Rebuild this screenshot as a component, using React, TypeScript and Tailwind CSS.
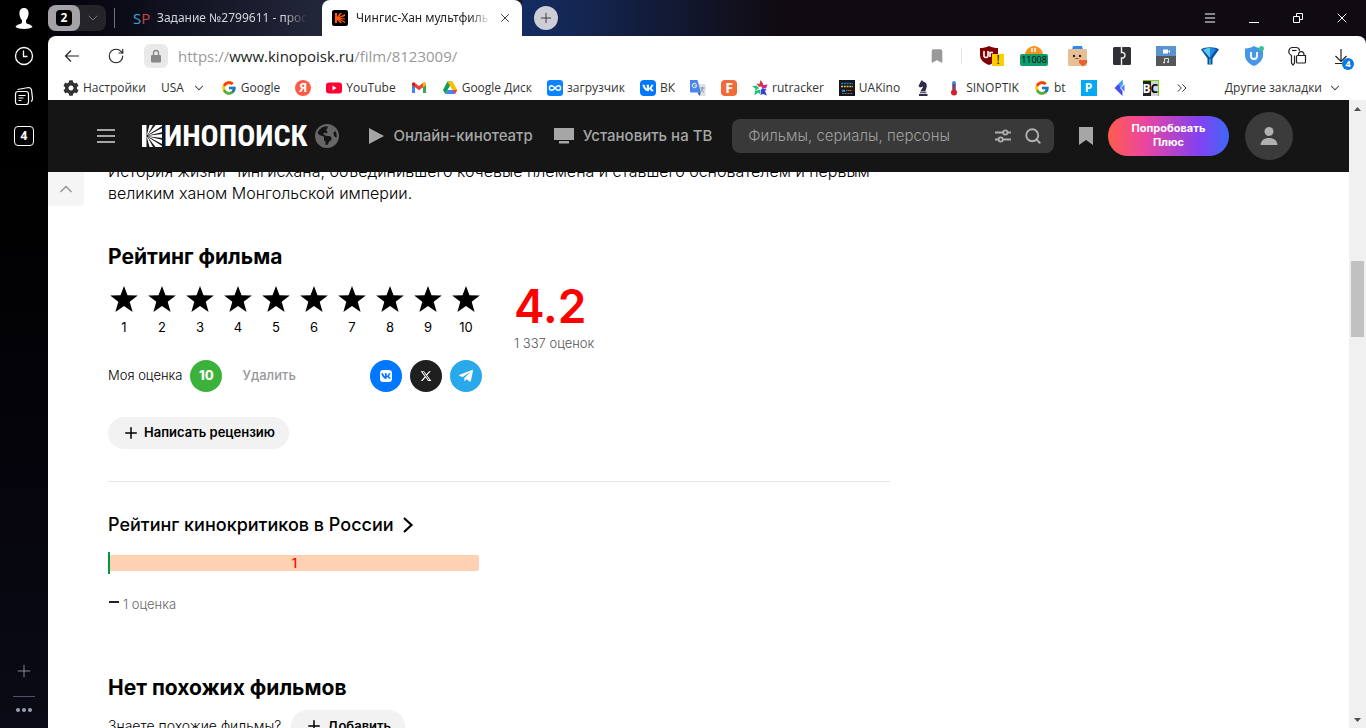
import type { ReactNode } from 'react';
import { Bookmark, ChevronDown, ChevronsRight, ChevronUp, Menu, Plus, RotateCw, Search, X } from 'lucide-react';
import { FaCog, FaTelegramPlane, FaVk } from 'react-icons/fa';
import { FaEarthAmericas, FaXTwitter } from 'react-icons/fa6';
import { FcGoogle } from 'react-icons/fc';

interface BookmarkItem {
    label: string;
    text?: string;
    icon?: ReactNode;
    folder?: boolean;
}

const GoogleIcon = () => <FcGoogle className="h-4 w-4" />;

const YoutubeIcon = () => (
    <svg viewBox="0 0 16 16" className="h-4 w-4">
        <rect y="2.5" width="16" height="11" rx="3" fill="#ff0033" />
        <path d="M6.5 5.6v4.8L10.6 8z" fill="#fff" />
    </svg>
);

const GmailIcon = () => (
    <svg viewBox="0 0 16 16" className="h-4 w-4">
        <path d="M1 4.5V13h3V6.7z" fill="#4285f4" />
        <path d="M15 4.5V13h-3V6.7z" fill="#34a853" />
        <path d="M1 4.3C1 2.6 2.8 2 4 3l4 3.1L12 3c1.2-1 3-.4 3 1.3L15 5l-7 5.2L1 5z" fill="#ea4335" />
        <path d="M12 3c1.2-1 3-.4 3 1.3V5l-3 2.2z" fill="#fbbc04" />
        <path d="M4 3C2.8 2 1 2.6 1 4.3V5l3 2.2z" fill="#c5221f" />
    </svg>
);

const DriveIcon = () => (
    <svg viewBox="0 0 16 16" className="h-4 w-4">
        <path d="M5.5 1.5h5L6 9.3 3.3 14 1 10z" fill="#0f9d58" />
        <path d="M5.5 1.5h5L15.2 10h-5z" fill="#fbbc04" />
        <path d="M1 10l2.3 4h9.600l2.300-4H5.600l-2.300 4z" fill="#4285f4" />
        <path d="M12.9 14l2.300-4h-4.600z" fill="#ea4335" />
        <path d="M8 6.3L10.1 10H5.9z" fill="#fff" />
    </svg>
);

const LoopIcon = () => (
    <svg viewBox="0 0 16 16" className="h-4 w-4">
        <rect width="16" height="16" rx="3" fill="#0b84ff" />
        <path
            d="M8 8C6.8 6.5 6 5.7 4.7 5.7a2.3 2.3 0 000 4.600C6 10.3 6.800 9.5 8 8s2-2.300 3.300-2.300a2.300 2.300 0 010 4.600C10 10.300 9.200 9.500 8 8z"
            fill="none"
            stroke="#fff"
            strokeWidth="1.4"
        />
    </svg>
);

const VkIcon = () => (
    <span className="flex h-4 w-4 items-center justify-center rounded bg-[#0077ff] text-white">
        <FaVk className="h-3 w-3" />
    </span>
);

const TranslateIcon = () => (
    <svg viewBox="0 0 16 16" className="h-4 w-4">
        <path d="M6 4h9.500v12H9.500z" fill="#dfe1e5" />
        <path d="M0 0h7.500L11 12.500H1a1 1 0 01-1-1z" fill="#4c86ec" />
        <path d="M7.500 12.500H11L9.300 16z" fill="#2f5fc4" />
        <path d="M6.700 5.700H4.600M6.500 4.600a2.200 2.200 0 10.200 1.300" fill="none" stroke="#fff" strokeWidth="1" />
        <path d="M10.500 8h4.200M12.500 7v1c0 2-1 3.300-2 4M11.300 9.500c.7 1.300 1.600 2 2.700 2.700" fill="none" stroke="#7a8a99" strokeWidth=".9" />
    </svg>
);

const PinwheelIcon = () => (
    <svg viewBox="0 0 16 16" className="h-4 w-4">
        <path d="M7 7L4.500 3.500 7.500 4l1-4 2.500 3.500L10 7z" fill="#e0314b" />
        <path d="M10 3.500l1.500 1.500 4-.5-1.500 4-4-.5z" fill="#d12a8b" />
        <path d="M10 8l4.500 1.500-1.500 1.500 2 4.500-4-1.500-2.500 1 .5-5z" fill="#3b3fd8" />
        <path d="M8.500 9.500L8 14l-2-1.500L2.500 15.500 3 11z" fill="#19c46b" />
        <path d="M7 8l-4 3 .5-2.500L0 6.500l4.500-1z" fill="#19c46b" />
        <circle cx="8.300" cy="8" r="1.400" fill="#fff" />
    </svg>
);

const UaKinoIcon = () => (
    <svg viewBox="0 0 16 16" className="h-4 w-4">
        <rect width="16" height="16" fill="#15171c" />
        <path d="M2 3.500h12" stroke="#2a7fc4" strokeWidth="1.600" strokeDasharray="2 .8" />
        <path d="M2 6.500h12" stroke="#e8c531" strokeWidth="1.400" strokeDasharray="2 .8" />
        <path d="M3 10.800h3" stroke="#2a9df4" strokeWidth="2" />
        <path d="M7 10.500h6" stroke="#d8702c" strokeWidth="1.200" strokeDasharray="1.500 .5" />
        <path d="M3 13.500h10" stroke="#8a8a8a" strokeWidth=".8" strokeDasharray="1 .5" />
    </svg>
);

const KnightIcon = () => (
    <svg viewBox="0 0 16 16" className="h-4 w-4" fill="#2f2c4a">
        <path d="M7 0l1 1.500c3 .5 4 2.500 3.800 5-.2 2-1.300 3.200-1.300 5H5.500c0-2 2.500-3 2.500-5L5 7.500 3.500 6l2-4z" />
        <path d="M5 12.300h6.500v1H5zM4 14h8.500v2H4z" />
    </svg>
);

const ThermometerIcon = () => (
    <svg viewBox="0 0 16 16" className="h-4 w-4">
        <rect x="6" y="1" width="4" height="10" rx="2" fill="#3b8fe0" />
        <path d="M8 4v8" stroke="#d3202b" strokeWidth="2" />
        <circle cx="8" cy="12.500" r="3" fill="#d3202b" />
    </svg>
);

const FlutterIcon = () => (
    <svg viewBox="0 0 16 16" className="h-4 w-4">
        <path d="M2.500 8L10.500 0v5L8 8l2.500 3v5z" fill="#4a4df0" />
        <path d="M6.500 4l4-4v5L8.500 7.500z" fill="#35a7f5" />
        <path d="M9 8l3.500-3.500v7z" fill="#4b7cf5" />
    </svg>
);

const LetterIcon = ({ children, className }: { children: ReactNode; className: string }) => (
    <span className={`flex h-4 w-4 items-center justify-center leading-none font-bold ${className}`}>{children}</span>
);

const BOOKMARKS: BookmarkItem[] = [
    { label: 'Настройки', text: 'Настройки', icon: <FaCog className="h-4 w-4 text-[#333]" /> },
    { label: 'USA', text: 'USA', folder: true },
    { label: 'Google', text: 'Google', icon: <GoogleIcon /> },
    { label: 'Яндекс', icon: <LetterIcon className="rounded-full bg-[#fc5b46] text-xs text-white">Я</LetterIcon> },
    { label: 'YouTube', text: 'YouTube', icon: <YoutubeIcon /> },
    { label: 'Gmail', icon: <GmailIcon /> },
    { label: 'Google Диск', text: 'Google Диск', icon: <DriveIcon /> },
    { label: 'загрузчик', text: 'загрузчик', icon: <LoopIcon /> },
    { label: 'ВК', text: 'ВК', icon: <VkIcon /> },
    { label: 'Переводчик', icon: <TranslateIcon /> },
    { label: 'F', icon: <LetterIcon className="rounded-sm bg-[#f26b3a] text-sm text-white">F</LetterIcon> },
    { label: 'rutracker', text: 'rutracker', icon: <PinwheelIcon /> },
    { label: 'UAKino', text: 'UAKino', icon: <UaKinoIcon /> },
    { label: 'Шахматы', icon: <KnightIcon /> },
    { label: 'SINOPTIK', text: 'SINOPTIK', icon: <ThermometerIcon /> },
    { label: 'bt', text: 'bt', icon: <GoogleIcon /> },
    { label: 'P', icon: <LetterIcon className="bg-[#03a9f4] text-xs text-white">P</LetterIcon> },
    { label: 'Flutter', icon: <FlutterIcon /> },
    {
        label: 'BC',
        icon: (
            <span className="flex h-4 w-4 border-t border-r border-lime-500 text-xs leading-4 font-bold">
                <span className="w-2 bg-[#222] text-white">B</span>
                <span className="w-2 bg-gray-300 text-black">C</span>
            </span>
        ),
    },
];

const SideBar = () => (
    <aside className="flex w-12 shrink-0 flex-col items-center bg-linear-to-b from-black via-[#040308] to-[#0a0b16] text-white">
        <button aria-label="Профиль" className="flex h-9 items-center">
            <svg viewBox="0 0 20 24" className="h-6 w-5">
                <path
                    d="M10 2c3 0 4.600 2 4.600 5 0 3.200-1.200 6-2.600 7.200v2.200c0 1.600 6 1.800 6.500 4.600-3 2.500-14 2.500-17 0C2 18.200 8 18 8 16.400v-2.200C6.600 13 5.400 10.200 5.400 7c0-3 1.600-5 4.600-5z"
                    fill="#fff"
                />
            </svg>
        </button>
        <button aria-label="История" className="flex h-10 items-center">
            <svg viewBox="0 0 20 20" className="h-5 w-5" fill="none" stroke="#fff" strokeWidth="1.300">
                <circle cx="10" cy="10" r="8.500" />
                <path d="M9.500 4.500v6h4" />
            </svg>
        </button>
        <button aria-label="Коллекции" className="flex h-10 items-center">
            <svg viewBox="0 0 20 20" className="h-5 w-5" fill="none" stroke="#fff" strokeWidth="1.200">
                <rect x="1.500" y="5.500" width="13" height="13" rx="2.500" />
                <path d="M4.500 9.500h7M4.500 12h5M4.500 14.500h3" />
                <path d="M3.500 3.500l11-2c1.500 0 2.700 1 3 2.500l1 8.500c0 1.500-.5 2.500-1.500 3" />
            </svg>
        </button>
        <button aria-label="Группы вкладок" className="mt-2.5 flex h-5 w-5 items-center justify-center rounded border border-white text-xs font-bold">
            4
        </button>
        <div className="grow" />
        <button aria-label="Добавить панель" className="text-gray-400">
            <Plus className="h-5 w-5" strokeWidth={1} />
        </button>
        <div className="mt-[15px] mb-[11px] w-[22px] border-t border-gray-600" />
        <button aria-label="Ещё" className="mb-4 flex gap-0.5">
            <span className="h-1 w-1 rounded-full bg-gray-400" />
            <span className="h-1 w-1 rounded-full bg-gray-400" />
            <span className="h-1 w-1 rounded-full bg-gray-400" />
        </button>
    </aside>
);

const TabStrip = () => (
    <div className="flex h-9 shrink-0 items-center bg-linear-to-r from-[#05040c] from-0% via-[#222639] via-20% to-[#100b12] to-45% text-xs">
        <div className="flex h-[26px] rounded-lg bg-[#252429]">
            <button aria-label="2 вкладки" className="flex w-8 items-center justify-center rounded-lg bg-[#a3a2a7]">
                <span className="flex h-4 w-4 items-center justify-center rounded bg-black text-xs font-bold text-white">2</span>
            </button>
            <button aria-label="Список вкладок" className="flex w-[26px] items-center justify-center text-gray-400">
                <ChevronDown className="h-4 w-4" strokeWidth={1} />
            </button>
        </div>
        <div className="ml-2 h-5 w-px bg-gray-500" />
        <button className="flex h-full w-[207px] items-center pl-4.5 text-gray-300">
            <span className="w-6 shrink-0 text-left text-[15px]">
                <span className="text-[#3ca7dc]">S</span>
                <span className="text-[#c94444]">P</span>
            </span>
            <span className="font-['Noto_Sans',sans-serif] whitespace-nowrap [mask-image:linear-gradient(to_right,black_85%,transparent)]">
                Задание №2799611 - прос
            </span>
        </button>
        <div className="flex h-full w-50 items-center gap-2 rounded-t-lg bg-white px-2.5 text-[#222]">
            <svg viewBox="0 0 16 16" className="h-4 w-4 shrink-0">
                <rect width="16" height="16" rx="2" fill="#000" />
                <path d="M3 3h2v4l3-4h2L7 7l6-3v2L8 8l5 .5v1L8 9l5 2.500v1.500L7.500 10l2.500 3H8L5 9.500V13H3z" fill="#ff5a00" />
            </svg>
            <button className="grow text-left font-['Noto_Sans',sans-serif] whitespace-nowrap [mask-image:linear-gradient(to_right,black_85%,transparent)]">
                Чингис-Хан мультфиль
            </button>
            <button aria-label="Закрыть вкладку" className="shrink-0">
                <X className="h-3.5 w-3.5" strokeWidth={1.5} />
            </button>
        </div>
        <div className="flex h-full w-64 items-center bg-linear-to-r from-[#142c62] to-transparent">
            <button aria-label="Новая вкладка" className="ml-3 flex h-6 w-6 items-center justify-center rounded-full bg-[#cdced6] text-[#222]">
                <Plus className="h-4 w-4" strokeWidth={1.2} />
            </button>
        </div>
        <div className="mr-0.5 ml-auto flex items-center text-white">
            <button aria-label="Меню" className="flex w-11 justify-center">
                <Menu className="h-3.5 w-3.5" strokeWidth={1.8} />
            </button>
            <button aria-label="Свернуть" className="flex h-2.5 w-11 items-end justify-center">
                <span className="h-px w-2.5 bg-white" />
            </button>
            <button aria-label="Восстановить" className="flex w-11 justify-center">
                <svg viewBox="0 0 12 12" className="h-3 w-3" fill="none" stroke="#fff">
                    <path d="M1.500 4.500h6v6h-6zM4.500 4V1.500h6v6H8" />
                </svg>
            </button>
            <button aria-label="Закрыть" className="flex w-11 justify-center">
                <X className="h-4 w-4" strokeWidth={1.5} />
            </button>
        </div>
    </div>
);

const Extensions = () => (
    <div className="flex items-center gap-5">
        <button aria-label="uBlock" className="relative h-6 w-6">
            <svg viewBox="0 0 24 24" className="h-6 w-6">
                <path d="M11 2c3 1.500 6 2 9 2v7c0 5-4 8-9 10-5-2-9-5-9-10V4c3 0 6-.5 9-2z" fill="#800000" />
                <path d="M6 7v4.500a2 2 0 004 0V7M12 13V8.500h3" fill="none" stroke="#fff" strokeWidth="1.600" />
            </svg>
            <span className="absolute -right-0.5 bottom-0.5 h-3 w-3 bg-[#ffcc00] text-center text-xs leading-3 text-black">!</span>
        </button>
        <button aria-label="Счётчик" className="relative -mx-0.5 h-6 w-7">
            <svg viewBox="0 0 24 24" className="mx-auto h-6 w-6">
                <circle cx="12" cy="11" r="9" fill="#f7931a" />
                <path d="M10 4v4M13 4v4" stroke="#fff" strokeWidth="1.500" />
            </svg>
            <span className="absolute inset-x-0 bottom-0.5 h-3 rounded-xs bg-[#0f9d6e] text-center text-[9px] leading-3 text-black">11008</span>
        </button>
        <button aria-label="Помощник">
            <svg viewBox="0 0 24 24" className="h-6 w-6">
                <path d="M7 2h9l1 4H6z" fill="#2b8cf0" />
                <rect x="2" y="5" width="19" height="17" rx="1.500" fill="#e8bf94" />
                <circle cx="8" cy="12" r="1.200" fill="#222" />
                <circle cx="14" cy="12" r="1.200" fill="#222" />
                <path d="M9.500 14.500h3" stroke="#a33" strokeWidth="1" />
                <path d="M13 16h8v3l-4 3.500-4-3.500z" fill="#e8622c" />
            </svg>
        </button>
        <button aria-label="Тёмная тема">
            <svg viewBox="0 0 24 24" className="h-6 w-6">
                <rect x="3" y="3" width="18" height="18" rx="1.500" fill="#2f3033" />
                <path d="M11.500 3v5.500c1.500-.5 3.500.5 3.500 2.700s-2 3.300-3.500 2.800v7" fill="none" stroke="#f2f2f2" strokeWidth="1.400" />
            </svg>
        </button>
        <button aria-label="Загрузка медиа">
            <svg viewBox="0 0 24 24" className="h-6 w-6">
                <rect x="2" y="2" width="20" height="10" fill="#5b93cf" />
                <rect x="2" y="12" width="20" height="10" fill="#54585b" />
                <path d="M9 5.500h5v4H9zM14 7.500l2-1.500v3z" fill="#fff" />
                <path d="M10.500 18.500v-4h4V18" fill="none" stroke="#ddd" strokeWidth="1" />
                <circle cx="10" cy="18.500" r="1" fill="#ddd" />
                <circle cx="14" cy="18" r="1" fill="#ddd" />
            </svg>
        </button>
        <button aria-label="Кристалл">
            <svg viewBox="0 0 24 24" className="h-6 w-6">
                <path d="M3 5.500C6 2.500 18 2.500 21 5.500L14.500 14.500v6h-5v-6z" fill="#0c4f9c" />
                <path d="M5 6c2-1.500 4-2 7-2v10z" fill="#59c8f7" />
                <path d="M12 4c3 0 4.500.5 6 1.500L12 14z" fill="#1a8be0" />
                <path d="M11 15h2v5h-2z" fill="#2f9fe8" />
            </svg>
        </button>
        <button aria-label="Защита">
            <svg viewBox="0 0 24 24" className="h-6 w-6">
                <path d="M12 2c2.500 1.600 5.500 2.500 9 2.500V11c0 5.500-4 9-9 11-5-2-9-5.500-9-11V4.500C6.500 4.500 9.500 3.600 12 2z" fill="#4796e8" />
                <path d="M9 8v4c0 4 6 4 6 0V8" fill="none" stroke="#fff" strokeWidth="1.800" />
                <circle cx="19.500" cy="4.500" r="2.500" fill="#38c793" />
            </svg>
        </button>
        <button aria-label="Пароли">
            <svg viewBox="0 0 24 24" className="h-6 w-6" fill="none" stroke="#222" strokeWidth="1.200">
                <path d="M8.500 11.500V19l-1.500 2-1.500-2v-7.500C3.500 10.500 2.500 8.500 3 6.500 3.300 4.500 4.500 3.500 6.500 3.500h3.500c2 0 3.500 1.500 3.500 3.500" />
                <path d="M6 6.500h4.500" />
                <path d="M11.500 11.500h8v6.500a1 1 0 01-1 1h-7a1 1 0 01-1-1v-5.500a1 1 0 011-1zM12.500 11c0-4.500 5.500-4.500 5.500 0" />
            </svg>
        </button>
        <button aria-label="Загрузки" className="relative">
            <svg viewBox="0 0 24 24" className="h-6 w-6" fill="none" stroke="#222" strokeWidth="1.200">
                <path d="M11 5v12M5.500 12l5.500 5.500 5.500-5.500M5 19.500h8" />
            </svg>
            <span className="absolute right-0 -bottom-0.5 h-3 w-3 rounded-full bg-[#0a7bdc] text-center text-[9px] leading-3 font-bold text-white">
                4
            </span>
        </button>
    </div>
);

const AddressBar = () => (
    <div className="flex h-10 shrink-0 items-center rounded-t-lg bg-white pr-3 pl-3 text-[#222]">
        <button aria-label="Назад" className="flex w-6 justify-center">
            <svg viewBox="0 0 16 16" className="h-4 w-4" fill="none" stroke="currentColor" strokeWidth="1.200">
                <path d="M15 8H1.500M7 2.500L1.500 8 7 13.500" />
            </svg>
        </button>
        <button aria-label="Обновить" className="ml-5 flex w-6 justify-center">
            <RotateCw className="h-[18px] w-[18px]" strokeWidth={1.5} />
        </button>
        <button aria-label="Защищённое соединение" className="ml-4 flex h-6 w-6 items-center justify-center rounded-md bg-[#e9e9e9]">
            <svg viewBox="0 0 14 14" className="h-3.5 w-3.5">
                <rect x="2" y="6" width="10" height="7.500" rx="1" fill="#888" />
                <path d="M4.500 6V4a2.500 2.500 0 015 0v2" fill="none" stroke="#888" strokeWidth="1.300" />
            </svg>
        </button>
        <button className="ml-2.5 text-[15px] text-[#999]">
            https://<span className="text-[#222]">www.kinopoisk.ru</span>/film/8123009/
        </button>
        <button aria-label="В закладки" className="ml-auto text-[#999]">
            <Bookmark className="h-4 w-4" fill="currentColor" />
        </button>
        <div className="mr-4 ml-4 h-4 w-px bg-gray-200" />
        <Extensions />
    </div>
);

const BookmarksBar = () => (
    <nav className="flex h-6 shrink-0 items-center bg-white pr-6 pl-[15px] text-xs whitespace-nowrap text-[#333]">
        <div className="flex items-center gap-[15px]">
            {BOOKMARKS.map((item) => (
                <a key={item.label} href="#" aria-label={item.label} className="flex items-center gap-1">
                    {item.icon}
                    {item.text}
                    {item.folder && <ChevronDown className="ml-1 h-3.5 w-3.5" strokeWidth={1.8} />}
                </a>
            ))}
            <button aria-label="Ещё закладки">
                <ChevronsRight className="h-4 w-4" strokeWidth={1.5} />
            </button>
        </div>
        <button className="ml-auto flex items-center gap-1.5">
            Другие закладки
            <ChevronDown className="h-3.5 w-3.5" strokeWidth={1.8} />
        </button>
    </nav>
);

const KinopoiskLogo = () => (
    <a href="#" aria-label="Кинопоиск" className="flex items-center text-white">
        <svg viewBox="0 0 22 22" className="h-[22px] w-[22px]" fill="#fff">
            <path d="M0 0h4.500v22H0z" />
            <path d="M5 9.500L7.500 0H11L5.500 10z" />
            <path d="M5.500 10.300L13.500 0H20v1z" />
            <path d="M6 10.400L20 3v4.200z" />
            <path d="M6 10.800l14-1.900v4.200L6 11.200z" />
            <path d="M6 11.600l14 3.200V19z" />
            <path d="M5.500 11.700L20 21v1h-6.500z" />
            <path d="M5 12.500l.5-.5L11 22H7.500z" />
        </svg>
        <span className="font-['Liberation_Sans_Narrow','Roboto_Condensed','Roboto',sans-serif] text-[30px] leading-8 font-bold">ИНОПОИСК</span>
    </a>
);

const SiteHeader = () => (
    <header className="relative z-10 flex h-[72px] items-center bg-[#151515] pr-14 pl-12 text-[15px] font-medium text-[#a6a6a6]">
        <button aria-label="Меню сайта" className="flex w-5 flex-col gap-1 px-px">
            <span className="h-0.5 bg-[#a6a6a6]" />
            <span className="h-0.5 bg-[#a6a6a6]" />
            <span className="h-0.5 bg-[#a6a6a6]" />
        </button>
        <div className="ml-[26px]">
            <KinopoiskLogo />
        </div>
        <FaEarthAmericas className="ml-2 h-6 w-6 shrink-0 text-[#666]" />
        <a href="#" className="ml-7 flex items-center gap-2 whitespace-nowrap">
            <svg viewBox="0 0 18 18" className="h-[18px] w-[18px]">
                <path d="M2 1l15 8-15 8z" fill="#a6a6a6" />
            </svg>
            Онлайн-кинотеатр
        </a>
        <a href="#" className="ml-5 flex items-center gap-2 whitespace-nowrap">
            <svg viewBox="0 0 22 18" className="h-[18px] w-[22px]">
                <path d="M1 1h20v12H1zM6 14h10v2.500H6z" fill="#a6a6a6" />
            </svg>
            Установить на ТВ
        </a>
        <div className="ml-5 flex h-[34px] min-w-0 grow items-center gap-2 rounded-lg bg-[#393939] px-3">
            <input
                aria-label="Поиск"
                placeholder="Фильмы, сериалы, персоны"
                className="min-w-0 grow bg-transparent pl-1 text-[15px] font-light outline-none placeholder:text-[#a0a0a0]"
            />
            <button aria-label="Фильтры">
                <svg viewBox="0 0 18 18" className="h-[18px] w-[18px]" fill="none" stroke="#b0b0b0" strokeWidth="1.800">
                    <path d="M1 5.500h8M13.500 5.500H17M1 12.500h3.500M9 12.500h8" />
                    <circle cx="11.300" cy="5.500" r="2.100" />
                    <circle cx="6.700" cy="12.500" r="2.100" />
                </svg>
            </button>
            <button aria-label="Найти" className="ml-1">
                <Search className="h-[18px] w-[18px] text-[#b0b0b0]" strokeWidth={2.5} />
            </button>
        </div>
        <button aria-label="Буду смотреть" className="ml-6 shrink-0">
            <svg viewBox="0 0 16 18" className="h-[18px] w-4">
                <path d="M1 0h14v18l-7-5-7 5z" fill="#a6a6a6" />
            </svg>
        </button>
        <button className="ml-3.5 h-10 w-[121px] shrink-0 rounded-full bg-[linear-gradient(to_right,#ff5c4d,#eb469f_30%,#8341ef_75%,#3f68f9)] pb-0.5 text-[11px] leading-[14px] font-bold text-white">
            Попробовать
            <br />
            Плюс
        </button>
        <button aria-label="Профиль пользователя" className="ml-4 flex h-12 w-12 shrink-0 items-center justify-center rounded-full bg-[#3b3b3b]">
            <svg viewBox="0 0 20 20" className="h-5 w-5" fill="#b0b0b0">
                <circle cx="10" cy="5.500" r="4.500" />
                <path d="M1.500 19c.5-4.500 3.500-7 8.500-7s8 2.500 8.500 7z" />
            </svg>
        </button>
    </header>
);

const RatingSection = () => (
    <section className="pt-[39px]">
        <h2 className="text-[21px] leading-7 font-bold">Рейтинг фильма</h2>
        <div className="mt-3 flex gap-8">
            <div className="w-[374px]">
                <div className="flex gap-1.5">
                    {[1, 2, 3, 4, 5, 6, 7, 8, 9, 10].map((score) => (
                        <button key={score} className="flex w-8 flex-col items-center text-[13px] leading-5">
                            <svg viewBox="0 0 32 32" className="h-8 w-8">
                                <path d="M16 3l3.500 9.200 10.300.4-8.100 6.200 2.900 10.200L16 23.100 7.400 29l2.900-10.200-8.100-6.200 10.300-.4z" />
                            </svg>
                            <span className="mt-0.5">{score}</span>
                        </button>
                    ))}
                </div>
                <div className="mt-[23px] flex items-center gap-2 text-[13px]">
                    <span className="font-light">Моя оценка</span>
                    <span className="flex h-8 w-8 items-center justify-center rounded-full bg-[#3bb33b] font-extrabold text-white">10</span>
                    <button className="ml-3 font-medium text-[#999]">Удалить</button>
                    <div className="ml-auto flex gap-2">
                        <button aria-label="Поделиться ВКонтакте" className="flex h-8 w-8 items-center justify-center rounded-full bg-[#0077ff]">
                            <span className="flex h-3 w-3 items-center justify-center rounded-[3px] bg-white text-[#0077ff]">
                                <FaVk className="h-2.5 w-2.5" />
                            </span>
                        </button>
                        <button aria-label="Поделиться в X" className="flex h-8 w-8 items-center justify-center rounded-full bg-[#1f1f1f] text-white">
                            <FaXTwitter className="h-3 w-3" />
                        </button>
                        <button aria-label="Поделиться в Telegram" className="flex h-8 w-8 items-center justify-center rounded-full bg-[#29a9eb] text-white">
                            <FaTelegramPlane className="h-4 w-4" />
                        </button>
                    </div>
                </div>
            </div>
            <div>
                <div className="text-[46px] leading-[46px] font-semibold text-[#ff0000]">4.2</div>
                <div className="mt-1 text-[13px] leading-5 font-light text-[#555]">1 337 оценок</div>
            </div>
        </div>
        <button className="mt-[25px] flex h-8 items-center gap-1 rounded-full bg-[#f2f2f2] px-3.5 text-[13px] font-semibold">
            <Plus className="h-[18px] w-[18px]" strokeWidth={2} />
            Написать рецензию
        </button>
    </section>
);

const CriticsSection = () => (
    <section className="mt-8 border-t border-[#e6e6e6] pt-[31px]">
        <h3 className="text-lg leading-6 font-medium">
            <a href="#" className="inline-flex items-center gap-2">
                Рейтинг кинокритиков в России
                <svg viewBox="0 0 12 18" className="h-[18px] w-3" fill="none" stroke="#000" strokeWidth="2.200">
                    <path d="M2 2l7.500 7L2 16" />
                </svg>
            </a>
        </h3>
        <div className="mt-[15px] flex w-[371px] items-center">
            <div className="h-[22px] w-0.5 bg-[#00993d]" />
            <div className="h-4 grow rounded-r-xs bg-[#ffd1b3] text-center text-[13px] leading-4 font-medium text-[#ff0000]">1</div>
        </div>
        <div className="mt-5 flex items-center gap-1 pl-px text-[13px] leading-5 font-light text-[#666]">
            <span className="mb-1 h-0.5 w-2.5 bg-[#222]" />
            1 оценка
        </div>
    </section>
);

const ScrollBar = () => (
    <div className="flex w-[17px] shrink-0 flex-col items-center bg-[#f0f0f0]">
        <svg viewBox="0 0 17 17" className="h-[17px] w-[17px]">
            <path d="M5 11l3.500-4 3.500 4z" fill="#505050" />
        </svg>
        <div className="mt-36 h-[76px] w-[13px] bg-[#c1c1c1]" />
        <svg viewBox="0 0 17 17" className="mt-auto h-[17px] w-[17px]">
            <path d="M5 7l3.500 4L12 7z" fill="#505050" />
        </svg>
    </div>
);

const FilmPage = () => (
    <div className="min-w-0 grow overflow-hidden bg-white font-['Inter',sans-serif] text-black">
        <SiteHeader />
        <div className="flex">
            <button aria-label="Наверх" className="flex h-[34px] w-9 shrink-0 items-center justify-center rounded-br bg-[#f5f5f5] text-[#999]">
                <ChevronUp className="h-5 w-5" />
            </button>
            <main className="-mt-3 ml-6 w-[782px]">
                <p className="text-base leading-[22px] font-light">
                    История жизни Чингисхана, объединившего кочевые племена и ставшего основателем и первым великим ханом Монгольской империи.
                </p>
                <RatingSection />
                <CriticsSection />
                <section className="mt-[60px]">
                    <h2 className="text-[21px] leading-7 font-bold">Нет похожих фильмов</h2>
                    <div className="mt-2 flex items-center gap-2.5 text-sm font-light">
                        Знаете похожие фильмы?
                        <button className="flex h-8 items-center gap-1 rounded-full bg-[#f2f2f2] px-3.5 text-[13px] font-semibold">
                            <Plus className="h-[18px] w-[18px]" strokeWidth={2} />
                            Добавить
                        </button>
                    </div>
                </section>
            </main>
        </div>
    </div>
);

export default function App() {
    return (
        <div className="flex h-screen overflow-hidden bg-black font-['Open_Sans','Noto_Sans',sans-serif]">
            <SideBar />
            <div className="flex min-w-0 grow flex-col">
                <TabStrip />
                <div className="shrink-0 bg-[#100b12]">
                    <AddressBar />
                </div>
                <BookmarksBar />
                <div className="flex min-h-0 grow">
                    <FilmPage />
                    <ScrollBar />
                </div>
            </div>
        </div>
    );
}
